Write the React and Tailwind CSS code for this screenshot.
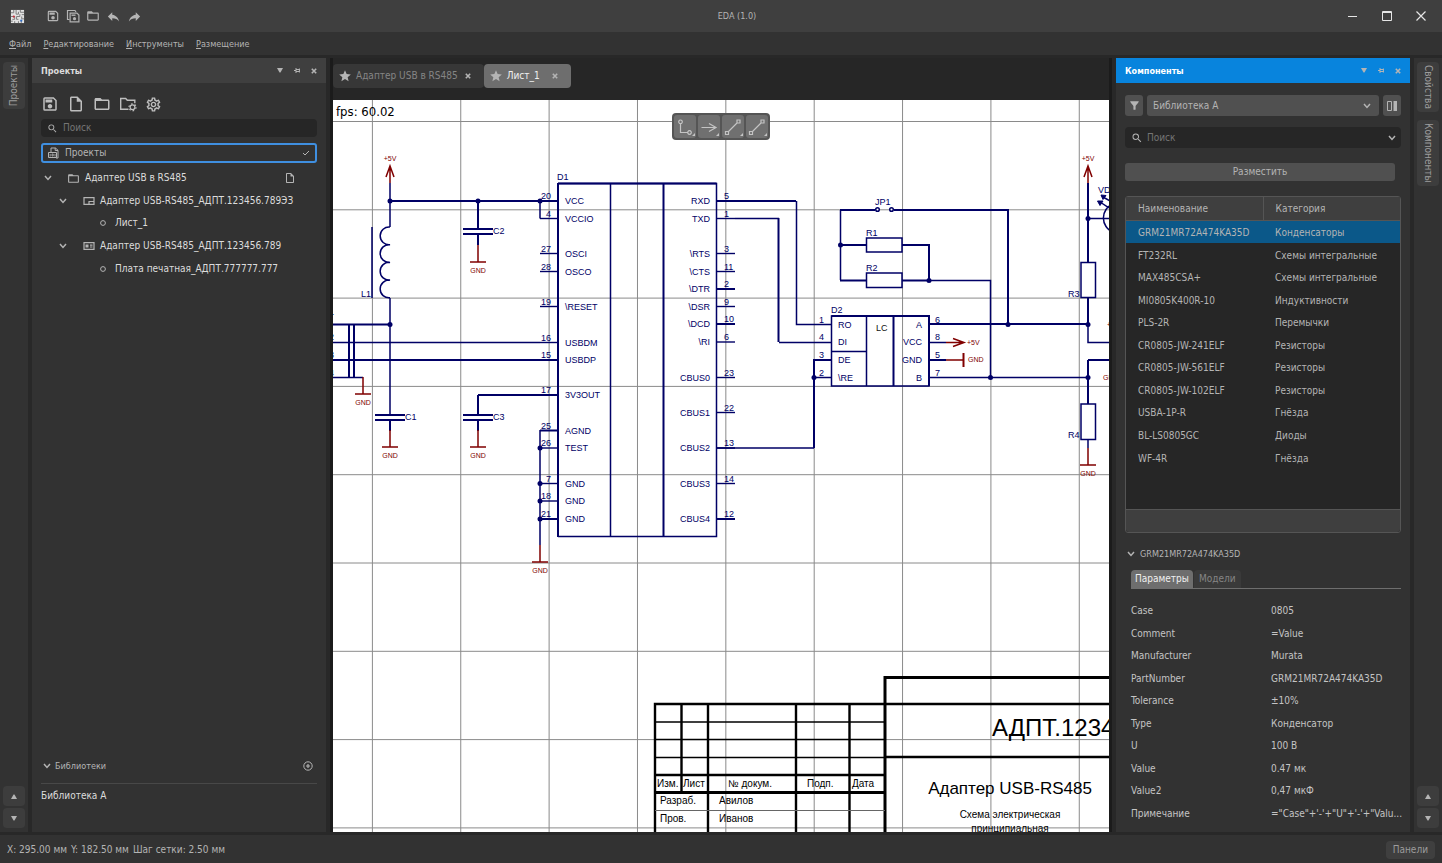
import React, { useState } from "react";
import {
    MdFilterAlt,
    MdFolderOpen,
    MdOutlineInsertDriveFile,
    MdOutlineSave,
    MdOutlineSettings,
    MdReply,
    MdSearch,
    MdStar,
} from "react-icons/md";

const menu = ["Файл", "Редактирование", "Инструменты", "Размещение"];

const components = [
    ["GRM21MR72A474KA35D", "Конденсаторы"],
    ["FT232RL", "Схемы интегральные"],
    ["MAX485CSA+", "Схемы интегральные"],
    ["MI0805K400R-10", "Индуктивности"],
    ["PLS-2R", "Перемычки"],
    ["CR0805-JW-241ELF", "Резисторы"],
    ["CR0805-JW-561ELF", "Резисторы"],
    ["CR0805-JW-102ELF", "Резисторы"],
    ["USBA-1P-R", "Гнёзда"],
    ["BL-LS0805GC", "Диоды"],
    ["WF-4R", "Гнёзда"],
];

const params = [
    ["Case", "0805"],
    ["Comment", "=Value"],
    ["Manufacturer", "Murata"],
    ["PartNumber", "GRM21MR72A474KA35D"],
    ["Tolerance", "±10%"],
    ["Type", "Конденсатор"],
    ["U", "100 В"],
    ["Value", "0.47 мк"],
    ["Value2", "0,47 мкФ"],
    ["Примечание", `="Case"+'-'+"U"+'-'+"Valu...`],
];

// small icons

const Chevron = ({ className = "" }) => (
    <svg viewBox="0 0 8 6" className={`h-[6px] w-[8px] ${className}`}>
        <path d="M1 1l3 3.4L7 1" fill="none" stroke="currentColor" strokeWidth="1.5" />
    </svg>
);

const Cross = () => (
    <svg viewBox="0 0 6 6" className="h-[6px] w-[6px]">
        <path d="M.8.8l4.4 4.4M5.2.8L.8 5.2" stroke="currentColor" strokeWidth="1.6" />
    </svg>
);

const Triangle = ({ className = "" }) => (
    <svg viewBox="0 0 6 5" className={`h-[5px] w-[6px] ${className}`}>
        <path d="M0 0h6L3.500 4.500H2.500z" fill="currentColor" />
    </svg>
);

const Pin = () => (
    <svg viewBox="0 0 6 5" className="h-[5px] w-[6px]">
        <path d="M0 2.500h2M2 0v5M2 1.500h3.500M2 3.500h3.500M5.400 .5v4" stroke="currentColor" fill="none" />
    </svg>
);

const AppLogo = () => (
    <svg viewBox="0 0 16 16" className="h-[15px] w-[15px]">
        <path d="M1 1h14v14H1z" fill="#e3e3e3" />
        <path
            d="M4 1v3H1M6.500 1v4.500H9V3M11 1v2.500h4M12.500 6H15M1 8h4v3H2.500M7 8h3.500V5.500M7 8v3h2M12.500 8v2.500H15M5 13v2M9 13v2M12 12.500v2.500M1 13h2"
            fill="none"
            stroke="#777"
            strokeWidth="1"
        />
        <circle cx="4" cy="8" r="1.200" fill="#c22f3a" />
        <circle cx="12" cy="12.500" r="1.200" fill="#2f6bc2" />
    </svg>
);

const SaveAll = () => (
    <svg viewBox="0 0 14 14" className="h-[14px] w-[14px]">
        <path d="M3.500 10.500h-2v-9h7.500l1 1.500" fill="none" stroke="currentColor" strokeWidth="1.200" />
        <path d="M4.100 4.100h6.800l2 2v6.800H4.100z" fill="none" stroke="currentColor" strokeWidth="1.200" />
        <path d="M5.500 5.500h4v1.400h-4z" fill="currentColor" />
        <circle cx="8.500" cy="9.700" r="1.600" fill="currentColor" />
    </svg>
);

const FolderGear = () => (
    <svg viewBox="0 0 18 18" className="h-[18px] w-[18px]">
        <path d="M9.500 14.300H1.700V3.500h5l1.600 1.700h7.500v3" fill="none" stroke="currentColor" strokeWidth="1.400" />
        <circle cx="13.500" cy="12.300" r="2.400" fill="none" stroke="currentColor" strokeWidth="1.200" />
        <circle
            cx="13.500"
            cy="12.300"
            r="3.500"
            fill="none"
            stroke="currentColor"
            strokeWidth="1.200"
            strokeDasharray="1.600 2.065"
        />
    </svg>
);

const ProjectsIcon = () => (
    <svg viewBox="0 0 12 12" className="h-[12px] w-[12px]">
        <path d="M3 5V1h4.500L10 3.300V11h-2M7.200 1v2.500H10" fill="none" stroke="currentColor" />
        <path d="M.5 5.500h8v5h-8z" fill="none" stroke="currentColor" />
        <path d="M2.200 7v2.500M4 7h1.200v2H4zM7 7v2.500" fill="none" stroke="currentColor" strokeWidth=".8" />
    </svg>
);

const SchemeIcon = () => (
    <svg viewBox="0 0 12 8" className="ml-[16px] h-[8px] w-[12px]">
        <path d="M1 .7h10v6.600H1zM6 7V4.500h5" fill="none" stroke="currentColor" strokeWidth="1.200" />
    </svg>
);

const BoardIcon = () => (
    <svg viewBox="0 0 12 8" className="ml-[16px] h-[8px] w-[12px]">
        <path d="M1 .7h10v6.600H1z" fill="none" stroke="currentColor" strokeWidth="1.200" />
        <path d="M2.500 2.500h3v3h-3zM7 2.500h2.500v1.200H7zM7 4.500h2.500v1H7z" fill="currentColor" />
    </svg>
);

// schematic symbols

const NAVY = "#000066";
const RED = "#800000";

const PinLabel = ({ x, y, end, children }) => (
    <text x={x} y={y} textAnchor={end ? "end" : "start"}>
        {children}
    </text>
);

const Ground = ({ x, y, from }) => (
    <g stroke={RED}>
        <path d={`M${x} ${from}V${y}M${x - 8} ${y}h16`} fill="none" />
        <text x={x} y={y + 11} textAnchor="middle" fontSize="7" fill={RED} stroke="none">
            GND
        </text>
    </g>
);

const Power = ({ x }) => (
    <g stroke={RED}>
        <path d={`M${x} 183V166M${x - 4} 177l4 -11l4 11`} fill="none" />
        <text x={x} y="161" textAnchor="middle" fontSize="7" fill={RED} stroke="none">
            +5V
        </text>
    </g>
);

const Capacitor = ({ x, y, name }) => (
    <g>
        <path d={`M${x - 15} ${y}h30M${x - 15} ${y + 5}h30M${x} ${y + 5}v11`} fill="none" strokeWidth="2" />
        <text x={x + 15} y={y + 5} stroke="none">
            {name}
        </text>
    </g>
);

const Dots = ({ points }) =>
    points.map(([x, y]) => <circle key={`${x}-${y}`} cx={x} cy={y} r="2.500" stroke="none" />);

const leftPins = [
    ["20", "VCC", 201, 2],
    ["4", "VCCIO", 218.5],
    ["27", "OSCI", 253.5],
    ["28", "OSCO", 271.5],
    ["19", "\\RESET", 306.5],
    ["16", "USBDM", 342.5],
    ["15", "USBDP", 360, 2],
    ["17", "3V3OUT", 395, 2],
    ["25", "AGND", 430.5, 2],
    ["26", "TEST", 448],
    ["7", "GND", 483.5],
    ["18", "GND", 501],
    ["21", "GND", 519, 2],
];

const rightPins = [
    ["5", "RXD", 201, 2],
    ["1", "TXD", 218.5],
    ["3", "\\RTS", 253.5],
    ["11", "\\CTS", 271.5],
    ["2", "\\DTR", 289, 2],
    ["9", "\\DSR", 306.5],
    ["10", "\\DCD", 324, 2],
    ["6", "\\RI", 342],
    ["23", "CBUS0", 377.5],
    ["22", "CBUS1", 412.5],
    ["13", "CBUS2", 448, 1.6],
    ["14", "CBUS3", 483.5],
    ["12", "CBUS4", 519, 2],
];

const gridX = [0, 1, 2, 3, 4, 5, 6, 7, 8].map((i) => 372.4 + i * 88.36);
const gridY = [0, 1, 2, 3, 4, 5, 6, 7, 8].map((i) => 121.5 + i * 88.3);

const Schematic = () => (
    <svg className="block h-full w-full bg-white" fontFamily="'Liberation Sans', Arial, sans-serif">
        <g transform="translate(-333 -100)">
            <g stroke="#8a8a8a" strokeWidth="1">
                {gridX.map((x) => (
                    <path key={x} d={`M${x} 100v3000`} />
                ))}
                {gridY.map((y) => (
                    <path key={y} d={`M333 ${y}h4000`} />
                ))}
            </g>

            <g stroke={NAVY} fill={NAVY} strokeWidth="1.500" fontSize="9">
                {/* thick nets */}
                <path
                    d="M390 201H540M478 201V229M478 395V415M478 395H540M333 360H540M333 324.500H390M349 324V377M354 324V377M735 201H796M778.500 218V342M840 210H875M894 210H1008V324M840 245H867M902 245H929V280M902 280.500H929M840 280.500H867M929 324H1088M814 448V360H831M1088 183V262M1088 297V324M1088 377V404M1088 360V377M1088 360H1110"
                    fill="none"
                    strokeWidth="2"
                />
                {/* thin nets */}
                <path
                    d="M390 183V227M390 298V415M540 201V218.500M333 342.500H540M333 377.500H363M540 430V545M735 218.500H779M796.500 201V324.500H831M779 342.500H831M717 448H814M840.500 210V280M929 280.500H990.500V377.500M929 377.500H1088M814 377.500H831M929 342.500H946M1088 218.500H1110M1088 324V342.500H1110"
                    fill="none"
                />
                {/* L1 */}
                <path
                    d="M372 227V298M390 227a8.900 8.900 0 1 0 0 17.700a8.900 8.900 0 1 0 0 17.700a8.900 8.900 0 1 0 0 17.700a8.900 8.900 0 1 0 0 17.700"
                    fill="none"
                />
                <Capacitor x={478} y={229} name="C2" />
                <Capacitor x={390} y={415} name="C1" />
                <Capacitor x={478} y={415} name="C3" />

                {/* D1 */}
                <path d="M558 183.500H716.500V536.500H558M610.500 183.500V536.500" fill="none" />
                <path d="M558 183V537M663.500 183V537M558 183.500H716.500" fill="none" strokeWidth="2" />
                {leftPins.map(([num, name, y, w]) => (
                    <g key={num}>
                        <path d={`M540 ${y}h18`} strokeWidth={w || 1.4} />
                        <g stroke="none">
                            <PinLabel x={551} y={Math.round(y) - 2} end>
                                {num}
                            </PinLabel>
                            <PinLabel x={565} y={Math.round(y) + 3}>
                                {name}
                            </PinLabel>
                        </g>
                    </g>
                ))}
                {rightPins.map(([num, name, y, w]) => (
                    <g key={num}>
                        <path d={`M717 ${y}h18`} strokeWidth={w || 1.4} />
                        <g stroke="none">
                            <PinLabel x={724} y={Math.round(y) - 2}>
                                {num}
                            </PinLabel>
                            <PinLabel x={710} y={Math.round(y) + 3} end>
                                {name}
                            </PinLabel>
                        </g>
                    </g>
                ))}

                {/* D2 */}
                <path d="M831.500 316H929V386H831.500zM866.500 316V386M831.500 351.500H866.500" fill="none" />
                <path d="M893.500 316V386M831.500 316H929V386" fill="none" strokeWidth="2" />
                <path d="M929 360H946" strokeWidth="2" />
                <path d="M946 342.500H964M953 338.500l11 4l-11 4M946 360H963" stroke={RED} fill="none" />
                <path d="M963.500 353V367" stroke={RED} strokeWidth="2" />

                {/* resistors and jumper */}
                <path
                    d="M866.500 238H902V252H866.500zM866.500 273H902V287.500H866.500zM1081 262.500H1095.500V297.500H1081zM1081 404H1095.500V439.500H1081z"
                    fill="none"
                />
                <path d="M1088 440V448" />
                <circle cx="877.500" cy="209.500" r="1.800" fill="#fff" />
                <circle cx="891.500" cy="209.500" r="1.800" fill="#fff" />

                {/* VD1 */}
                <path d="M1113 204a15 15 0 0 0 0 28M1103 197l9 5M1100 202l9 6" fill="none" strokeWidth="1.500" />
                <path d="M1101 195l5 .5l-3 4zM1097.500 201l5.500 0l-3 4.500z" strokeWidth="1" />

                <Dots
                    points={[
                        [390, 201],
                        [478, 201],
                        [540, 201],
                        [390, 324.5],
                        [540, 448],
                        [540, 483.5],
                        [540, 501],
                        [540, 519],
                        [814, 377.5],
                        [840.5, 245],
                        [929, 280.5],
                        [990.5, 377.5],
                        [1008, 324.5],
                        [1088, 218.5],
                        [1088, 324.5],
                        [1088, 377.5],
                    ]}
                />

                <Power x={390} />
                <Power x={1088} />
                <Ground x={478} y={262} from={245} />
                <Ground x={363} y={394} from={377} />
                <Ground x={390} y={447} from={430} />
                <Ground x={478} y={447} from={430} />
                <Ground x={540} y={562} from={545} />
                <Ground x={1088} y={465} from={448} />

                <g stroke="none">
                    <text x="557" y="180">D1</text>
                    <text x="831" y="313">D2</text>
                    <text x="361" y="297">L1</text>
                    <text x="875" y="205">JP1</text>
                    <text x="866" y="236">R1</text>
                    <text x="866" y="271">R2</text>
                    <text x="1068" y="297">R3</text>
                    <text x="1068" y="438">R4</text>
                    <text x="1098" y="193">VD1</text>
                    <text x="876" y="331" fill="#111">LC</text>
                    <text x="838" y="328">RO</text>
                    <text x="838" y="345">DI</text>
                    <text x="838" y="363">DE</text>
                    <text x="838" y="381">\RE</text>
                    <PinLabel x={922} y={328} end>A</PinLabel>
                    <PinLabel x={922} y={345} end>VCC</PinLabel>
                    <PinLabel x={922} y={363} end>GND</PinLabel>
                    <PinLabel x={922} y={381} end>B</PinLabel>
                    <text x="819" y="323">1</text>
                    <text x="819" y="340">4</text>
                    <text x="819" y="358">3</text>
                    <text x="819" y="376">2</text>
                    <text x="935" y="323">6</text>
                    <text x="935" y="340">8</text>
                    <text x="935" y="358">5</text>
                    <text x="935" y="376">7</text>
                    <text x="329" y="315">1</text>
                    <text x="329" y="340">2</text>
                    <text x="329" y="358">3</text>
                    <text x="329" y="376">4</text>
                    <g fontSize="7" fill={RED}>
                        <text x="967" y="345">+5V</text>
                        <text x="968" y="362">GND</text>
                        <text x="1107" y="327">+5V</text>
                        <text x="1103" y="380">GND</text>
                    </g>
                </g>
            </g>

            {/* title block */}
            <g stroke="#000" fill="none" strokeWidth="2.400">
                <path d="M655 832V704H4000M681.500 704V792M708 704V832M796 704V832M849.500 704V832M655 775H885M885 757H4000" />
                <path d="M885 832V677.500H4000M655 792.500H885" strokeWidth="3" />
                <path d="M655 722H885M655 739.500H885M655 757.500H885" strokeWidth="1.400" />
                <path d="M655 810.500H885" strokeWidth="1" stroke="#666" />
            </g>
            <g fontSize="10">
                <text x="657" y="787">Изм.</text>
                <text x="683" y="787">Лист</text>
                <text x="728" y="787">№ докум.</text>
                <text x="807" y="787">Подп.</text>
                <text x="852" y="787">Дата</text>
                <text x="660" y="804">Разраб.</text>
                <text x="719" y="804">Авилов</text>
                <text x="660" y="822">Пров.</text>
                <text x="719" y="822">Иванов</text>
                <text x="1010" y="818" textAnchor="middle">
                    Схема электрическая
                </text>
                <text x="1010" y="832" textAnchor="middle">
                    принципиальная
                </text>
                <text x="1010" y="794" fontSize="17" textAnchor="middle">
                    Адаптер USB-RS485
                </text>
                <text x="992" y="736" fontSize="24">
                    АДПТ.1234
                </text>
            </g>
            <text x="336" y="116" fontSize="13" fontFamily="'DejaVu Sans Condensed', sans-serif">
                fps: 60.02
            </text>
        </g>
    </svg>
);

const toolIcons = [
    <path key="0" d="M6.500 9v8.500h7M6.500 5a1.800 1.800 0 1 0 .01 0zM15.500 15.700a1.800 1.800 0 1 0 .01 0z" />,
    <path key="1" d="M3.500 12.500H18M11 8.500l7 4l-7 4" />,
    <path key="2" d="M6.500 16.500l8.500-8.500M3.500 16.500h3v3h-3zM15 5h3v3h-3z" />,
    <path key="3" d="M6.500 16.500l8.500-8.500M3.500 16.500h3v3h-3zM15 5h3v3h-3z" />,
];
const toolNames = ["Соединение", "Порт", "Линия", "Шина"];

const CanvasTools = () => (
    <div className="absolute top-[13px] left-1/2 flex -translate-x-1/2 gap-[2px] rounded bg-[#555] p-[2px]">
        {toolNames.map((name, i) => (
            <button key={name} aria-label={name} className="rounded-[3px] bg-[#707070] text-[#c4c4c4]">
                <svg viewBox="0 0 22 23" className="h-[23px] w-[22px]" fill="none" stroke="currentColor" strokeWidth="1.200">
                    {toolIcons[i]}
                    <path d="M21 18v3h-3z" fill="currentColor" stroke="none" />
                </svg>
            </button>
        ))}
    </div>
);

const PanelHeader = ({ title, className }) => (
    <div className={`flex h-[25px] shrink-0 items-center px-[9px] ${className}`}>
        <h2 className="flex-1 text-[9px] font-bold">{title}</h2>
        <div className="flex items-center gap-[11px] text-[#b4b4b4]">
            <button aria-label="Меню панели">
                <Triangle />
            </button>
            <button aria-label="Закрепить">
                <Pin />
            </button>
            <button aria-label="Закрыть панель">
                <Cross />
            </button>
        </div>
    </div>
);

const Rail = ({ tabs, flip }) => (
    <nav className="flex w-[28px] shrink-0 flex-col items-center bg-[#323232] py-[4px]">
        <div className="flex flex-1 flex-col gap-[8px]">
            {tabs.map((tab) => (
                <button
                    key={tab}
                    className="flex w-[22px] items-center justify-center rounded bg-[#3d3d3d] py-[3px] text-[10px] text-[#9c9c9c]"
                >
                    <span className={`leading-[14px] [writing-mode:vertical-rl] ${flip ? "rotate-180" : ""}`}>{tab}</span>
                </button>
            ))}
        </div>
        <div className="flex flex-col gap-[2px] text-[#b4b4b4]">
            <button aria-label="Вверх" className="flex h-[20px] w-[22px] items-center justify-center rounded bg-[#3d3d3d]">
                <Triangle className="rotate-180" />
            </button>
            <button aria-label="Вниз" className="flex h-[20px] w-[22px] items-center justify-center rounded bg-[#3d3d3d]">
                <Triangle />
            </button>
        </div>
    </nav>
);

const TitleBar = () => (
    <header className="flex h-[32px] shrink-0 items-center bg-[#3f3f3f] text-[#b4b4b4]">
        <div className="flex flex-1 items-center pl-[10px]">
            <AppLogo />
            <div className="ml-[21px] flex items-center gap-[6px]">
                <button aria-label="Сохранить">
                    <MdOutlineSave size={14} />
                </button>
                <button aria-label="Сохранить всё">
                    <SaveAll />
                </button>
                <button aria-label="Открыть">
                    <MdFolderOpen size={14} />
                </button>
                <button aria-label="Отменить">
                    <MdReply size={15} />
                </button>
                <button aria-label="Повторить">
                    <MdReply size={15} className="-scale-x-100" />
                </button>
            </div>
        </div>
        <h1 className="pl-[38px] text-[9px]">EDA (1.0)</h1>
        <div className="flex flex-1 items-center justify-end gap-[24px] pr-[16px] text-[#e6e6e6]">
            <button aria-label="Свернуть">
                <svg viewBox="0 0 10 10" className="h-[10px] w-[10px]">
                    <path d="M0 5.500h9" stroke="currentColor" />
                </svg>
            </button>
            <button aria-label="Развернуть">
                <svg viewBox="0 0 10 10" className="h-[10px] w-[10px]">
                    <path d="M.5 .5h9v9h-9zM.5 1.500h9" fill="none" stroke="currentColor" />
                </svg>
            </button>
            <button aria-label="Закрыть">
                <svg viewBox="0 0 10 10" className="h-[10px] w-[10px]">
                    <path d="M.5 .5l9 9M9.500 .5l-9 9" stroke="currentColor" strokeWidth="1.200" />
                </svg>
            </button>
        </div>
    </header>
);

const ProjectsPanel = () => {
    const [search, setSearch] = useState("");
    return (
        <section className="flex w-[294px] shrink-0 flex-col bg-[#323232]">
            <PanelHeader title="Проекты" className="bg-[#3f3f3f] text-[#dcdcdc]" />
            <div className="flex flex-1 flex-col px-[9px]">
                <div className="mt-[12px] flex items-center gap-[8px] text-[#bebebe]">
                    <button aria-label="Сохранить проект">
                        <MdOutlineSave size={18} />
                    </button>
                    <button aria-label="Новый файл">
                        <MdOutlineInsertDriveFile size={18} />
                    </button>
                    <button aria-label="Открыть проект">
                        <MdFolderOpen size={18} />
                    </button>
                    <button aria-label="Настройки проекта">
                        <FolderGear />
                    </button>
                    <button aria-label="Настройки">
                        <MdOutlineSettings size={17} />
                    </button>
                </div>
                <div className="mt-[6px] flex h-[18px] items-center rounded bg-[#262626] px-[6px]">
                    <MdSearch size={11} className="text-[#b4b4b4]" />
                    <input
                        type="text"
                        aria-label="Поиск"
                        placeholder="Поиск"
                        value={search}
                        onChange={(e) => setSearch(e.target.value)}
                        className="ml-[5px] min-w-0 flex-1 text-[10px] text-[#dcdcdc] outline-none placeholder:text-[#757575]"
                    />
                </div>
                <button className="mt-[6px] flex h-[20px] items-center rounded-[3px] border-2 border-[#3f8fe0] px-[5px] text-[10px] text-[#b4b4b4]">
                    <ProjectsIcon />
                    <span className="ml-[5px] flex-1 text-left">Проекты</span>
                    <svg viewBox="0 0 8 6" className="h-[6px] w-[8px]">
                        <path d="M1 3l2 2l4-4" fill="none" stroke="currentColor" />
                    </svg>
                </button>
                <ul className="mt-[4px] grid h-[113px] grid-rows-5 items-center text-[10px] text-[#dcdcdc] [&_svg]:shrink-0 [&_svg]:text-[#b4b4b4]">
                    <li className="flex items-center pl-[3px]">
                        <Chevron />
                        <MdFolderOpen size={13} className="ml-[15px]" />
                        <span className="ml-[5px] flex-1">Адаптер USB в RS485</span>
                        <MdOutlineInsertDriveFile size={12} className="mr-[21px]" />
                    </li>
                    <li className="flex items-center pl-[18px]">
                        <Chevron />
                        <SchemeIcon />
                        <span className="ml-[5px] whitespace-nowrap">Адаптер USB-RS485_АДПТ.123456.789ЭЗ</span>
                    </li>
                    <li className="flex items-center pl-[59px]">
                        <svg viewBox="0 0 6 6" className="h-[6px] w-[6px]">
                            <circle cx="3" cy="3" r="2.400" fill="none" stroke="currentColor" />
                        </svg>
                        <span className="ml-[9px]">Лист_1</span>
                    </li>
                    <li className="flex items-center pl-[18px]">
                        <Chevron />
                        <BoardIcon />
                        <span className="ml-[5px] whitespace-nowrap">Адаптер USB-RS485_АДПТ.123456.789</span>
                    </li>
                    <li className="flex items-center pl-[59px]">
                        <svg viewBox="0 0 6 6" className="h-[6px] w-[6px]">
                            <circle cx="3" cy="3" r="2.400" fill="none" stroke="currentColor" />
                        </svg>
                        <span className="ml-[9px] whitespace-nowrap">Плата печатная_АДПТ.777777.777</span>
                    </li>
                </ul>
                <div className="mt-auto border-b border-[#484848] pb-[10px]">
                    <div className="flex items-center pr-[4px] pl-[2px] text-[9px] text-[#b4b4b4]">
                        <Chevron />
                        <h3 className="ml-[4px] flex-1">Библиотеки</h3>
                        <button aria-label="Добавить библиотеку">
                            <svg viewBox="0 0 10 10" className="h-[10px] w-[10px]">
                                <circle cx="5" cy="5" r="4.200" fill="none" stroke="currentColor" />
                                <path d="M5 3v4M3 5h4" stroke="currentColor" strokeWidth="1.200" />
                            </svg>
                        </button>
                    </div>
                </div>
                <p className="mt-[5px] mb-[29px] text-[10px] text-[#dcdcdc]">Библиотека А</p>
            </div>
        </section>
    );
};

const Editor = () => (
    <main className="flex min-w-0 flex-1 flex-col border-x-[3px] border-[#1b1b1b] bg-[#262626]">
        <div className="flex h-[42px] shrink-0 items-center pb-[6px] text-[10px]">
            <div className="flex h-[24px] items-center rounded bg-[#373737] pr-[13px] pl-[5px] text-[#858585]">
                <MdStar size={14} className="text-[#b4b4b4]" />
                <a href="#adapter" className="mr-[7px] ml-[4px] whitespace-nowrap">
                    Адаптер USB в RS485
                </a>
                <button aria-label="Закрыть вкладку" className="text-[#b4b4b4]">
                    <Cross />
                </button>
            </div>
            <div className="flex h-[24px] items-center rounded bg-[#6e6e6e] pr-[13px] pl-[5px] text-[#f0f0f0]">
                <MdStar size={14} className="text-[#b4b4b4]" />
                <a href="#sheet" className="mr-[12px] ml-[4px]">
                    Лист_1
                </a>
                <button aria-label="Закрыть вкладку" className="text-[#b4b4b4]">
                    <Cross />
                </button>
            </div>
        </div>
        <div className="relative min-h-0 flex-1 overflow-hidden">
            <Schematic />
            <CanvasTools />
        </div>
    </main>
);

const ComponentsPanel = () => {
    const [selected, setSelected] = useState(0);
    const [search, setSearch] = useState("");
    return (
        <section className="flex w-[294px] shrink-0 flex-col bg-[#323232] text-[10px] text-[#b4b4b4]">
            <PanelHeader title="Компоненты" className="bg-[#0884dd] text-white" />
            <div className="flex min-h-0 flex-1 flex-col px-[9px] pt-[12px] pb-[7px]">
                <div className="flex h-[21px] gap-[4px]">
                    <button aria-label="Фильтр" className="flex w-[18px] items-center justify-center rounded-[3px] bg-[#505050]">
                        <MdFilterAlt size={13} />
                    </button>
                    <div className="relative flex-1">
                        <select
                            aria-label="Библиотека"
                            className="h-full w-full appearance-none rounded-[3px] bg-[#505050] pl-[6px] outline-none"
                        >
                            <option>Библиотека А</option>
                        </select>
                        <Chevron className="pointer-events-none absolute top-[8px] right-[8px]" />
                    </div>
                    <button aria-label="Вид" className="flex w-[18px] items-center justify-center rounded-[3px] bg-[#505050]">
                        <svg viewBox="0 0 10 10" className="h-[10px] w-[10px]">
                            <path d="M.5 .5h4v9h-4z" fill="none" stroke="currentColor" />
                            <path d="M6.500 0H10v10H6.500z" fill="currentColor" />
                        </svg>
                    </button>
                </div>
                <div className="mt-[11px] flex h-[21px] shrink-0 items-center rounded bg-[#262626] pr-[5px] pl-[6px]">
                    <MdSearch size={12} />
                    <input
                        type="text"
                        aria-label="Поиск компонентов"
                        placeholder="Поиск"
                        value={search}
                        onChange={(e) => setSearch(e.target.value)}
                        className="ml-[4px] min-w-0 flex-1 text-[#dcdcdc] outline-none placeholder:text-[#757575]"
                    />
                    <Chevron />
                </div>
                <button className="mt-[15px] mr-[6px] h-[18px] shrink-0 rounded-[3px] bg-[#505050] text-[#b4b4b4]">Разместить</button>

                <div className="mt-[15px] flex min-h-0 flex-1 flex-col rounded-[3px] border border-[#555] bg-[#262626]">
                    <table className="h-[272px] w-full table-fixed text-left">
                        <thead>
                            <tr className="h-[23px] border-b border-[#555] bg-[#3f3f3f]">
                                <th className="border-r border-[#555] pt-[2px] pl-[12px] font-normal">Наименование</th>
                                <th className="pt-[2px] pl-[12px] font-normal">Категория</th>
                            </tr>
                        </thead>
                        <tbody>
                            {components.map(([name, category], index) => (
                                <tr
                                    key={name}
                                    onClick={() => setSelected(index)}
                                    className={index === selected ? "bg-[#0b5889]" : ""}
                                >
                                    <td className="pt-[2px] pl-[12px] whitespace-nowrap">{name}</td>
                                    <td className="pt-[2px] pl-[12px] whitespace-nowrap">{category}</td>
                                </tr>
                            ))}
                        </tbody>
                    </table>
                    <div className="mt-auto h-[23px] rounded-b-[3px] border-t border-[#555] bg-[#3f3f3f]" />
                </div>

                <div className="mt-[14px] flex items-center pl-[2px] text-[9px]">
                    <Chevron />
                    <h3 className="ml-[5px]">GRM21MR72A474KA35D</h3>
                </div>
                <div className="mt-[9px] ml-[6px] flex shrink-0 gap-px border-b border-[#6e6e6e]">
                    <button className="h-[18px] rounded-t bg-[#6e6e6e] px-[4px] text-[#f0f0f0]">Параметры</button>
                    <button className="h-[18px] rounded-t bg-[#3a3a3a] px-[5px] text-[#858585]">Модели</button>
                </div>
                <dl className="mt-[11px] ml-[6px] grid h-[225px] shrink-0 grid-cols-[140px_1fr] grid-rows-10 items-center text-[#c4c4c4]">
                    {params.map(([name, value]) => (
                        <React.Fragment key={name}>
                            <dt>{name}</dt>
                            <dd className="whitespace-nowrap">{value}</dd>
                        </React.Fragment>
                    ))}
                </dl>
            </div>
        </section>
    );
};

const App = () => {
    return (
        <div className="flex h-screen flex-col overflow-hidden bg-[#282828] font-['DejaVu_Sans_Condensed','DejaVu_Sans',sans-serif] leading-[14px] text-[#b4b4b4]">
            <TitleBar />
            <nav className="flex h-[23px] shrink-0 items-center gap-[12px] bg-[#323232] px-[9px] text-[9px]">
                {menu.map((item) => (
                    <a key={item} href="#menu">
                        <span className="underline">{item[0]}</span>
                        {item.slice(1)}
                    </a>
                ))}
            </nav>
            <div className="flex min-h-0 flex-1 gap-[4px] py-[3px]">
                <Rail tabs={["Проекты"]} flip />
                <ProjectsPanel />
                <Editor />
                <ComponentsPanel />
                <Rail tabs={["Свойства", "Компоненты"]} />
            </div>
            <footer className="flex h-[28px] shrink-0 items-center justify-between bg-[#323232] px-[7px] pt-[2px] text-[10px]">
                <p className="flex gap-[4px]">
                    <span>X: 295.00 мм</span>
                    <span>Y: 182.50 мм</span>
                    <span>Шаг сетки: 2.50 мм</span>
                </p>
                <button className="h-[18px] rounded bg-[#3f3f3f] px-[7px] text-[#9c9c9c]">Панели</button>
            </footer>
        </div>
    );
};

export default App;
